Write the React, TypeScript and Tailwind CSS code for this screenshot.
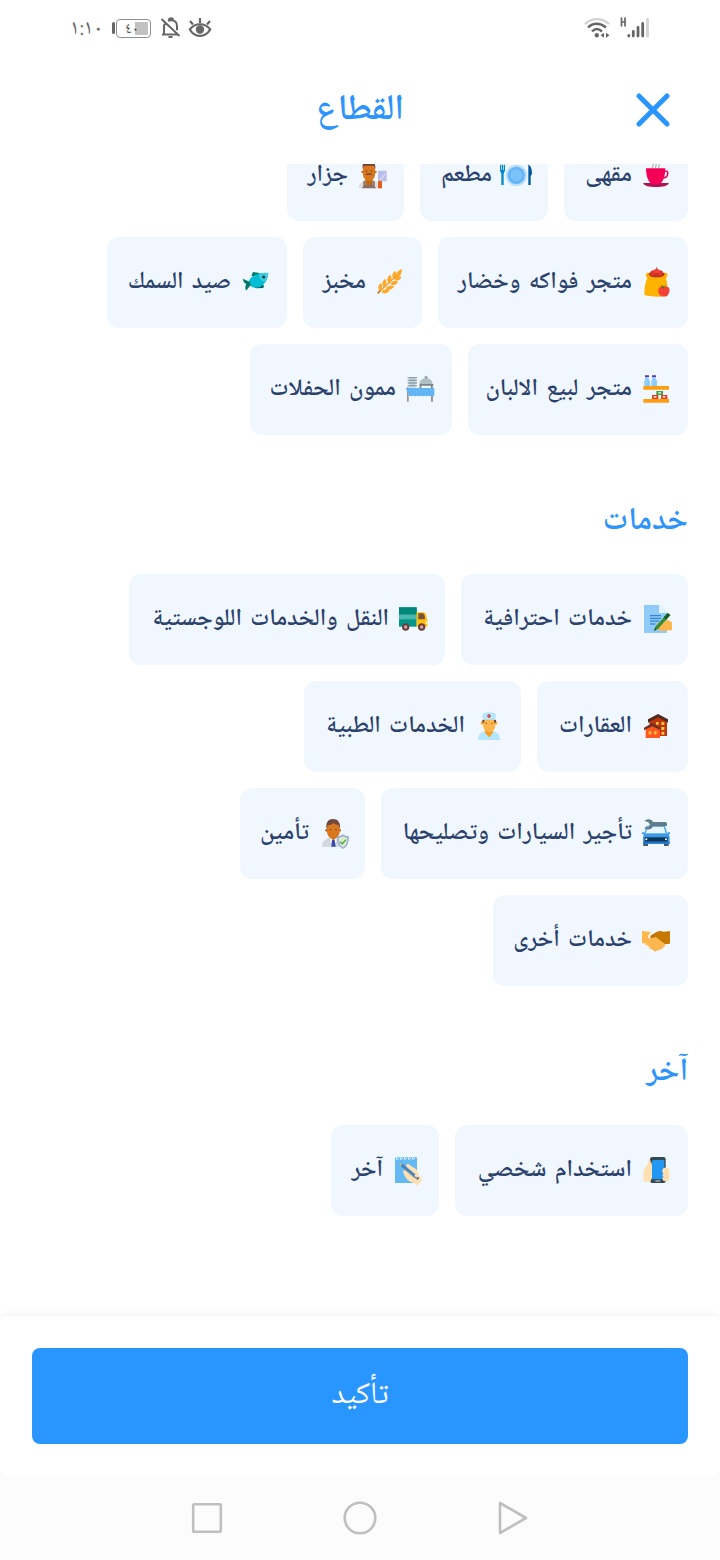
import React from 'react';

const FONT = "font-['Noto_Naskh_Arabic','DejaVu_Sans',sans-serif]";

function Svg({ children }: { children: React.ReactNode }) {
  return <svg viewBox="0 0 96 96" className="size-8 shrink-0" aria-hidden="true">{children}</svg>;
}

const Cup = () => (
  <Svg>
    <path d="M39 25c-4-5 3-8 0-13M48 25c-4-5 3-8 0-13M57 25c-4-5 3-8 0-13" fill="none" stroke="#8d8d8d" strokeWidth="2.5" />
    <path d="M72 34h8c6 0 5 20-12 20" fill="none" stroke="#f50057" strokeWidth="4.5" />
    <path d="M18 25h58c0 24-8 46-20 47H38C26 71 18 49 18 25z" fill="#f50057" />
    <path d="M9 69h78c-4 9-18 12-39 12S13 78 9 69z" fill="#ad1457" />
    <path d="M32 69h32l-5 4H37z" fill="#f50057" />
  </Svg>
);
const Restaurant = () => (
  <Svg>
    <circle cx="49" cy="46" r="32" fill="#bbdefb" />
    <circle cx="49" cy="46" r="26" fill="#64b5f6" />
    <circle cx="49" cy="46" r="18" fill="#7cc2fa" />
    <path d="M0 14h3v16h2V14h4v16h2V14h4v18l-4 9v34H4V41l-4-9z" fill="#0288d1" />
    <path d="M85 14c7 2 11 12 11 28l-4 6v27h-7z" fill="#01579b" />
  </Svg>
);
const Butcher = () => (
  <Svg>
    <path d="M8 85c0-16 10-20 24-24h16c16 4 24 8 24 24z" fill="#e0e0e0" />
    <path d="M28 55h22v18c-8 6-14 6-22 0z" fill="#bf6a13" />
    <circle cx="20" cy="36" r="4" fill="#c66a12" /><circle cx="58" cy="36" r="4" fill="#c66a12" />
    <path d="M21 26c0-22 36-22 36 0v16c0 14-9 20-18 20s-18-6-18-20z" fill="#d9781e" />
    <path d="M20 27C18 4 27 3 38 3s22 4 20 24l-4-10H24z" fill="#6d4038" />
    <path d="M29 46c2-6 8-7 10-5 2-2 8-1 10 5-3-2-6-2-10-2s-7 0-10 2z" fill="#6d4038" />
    <circle cx="31" cy="33" r="2" fill="#5b2e14" /><circle cx="47" cy="33" r="2" fill="#5b2e14" />
    <path d="M22 64l6-2v12h22V62l6 2v14l4 7H18l4-7z" fill="#8d6e63" />
    <path d="M66 32h23l3 3v29H66z" fill="#b8bde8" />
    <path d="M70 60l18-24v8L77 60z" fill="#d1d5f5" />
    <path d="M66 63h12v22H66z" fill="#e65c1c" />
  </Svg>
);
const Fruits = () => (
  <Svg>
    <path d="M22 32c-7-5-6-13 1-15h54c7 2 8 10 1 15 4 16 6 34 4 55-18 3-48 3-69-3 0-20 2-36 9-52z" fill="#ffb300" />
    <path d="M22 30c18 6 38 6 56 0-3 6-53 7-56 0z" fill="#ff8f00" />
    <ellipse cx="50" cy="22" rx="24" ry="9" fill="#b02a20" />
    <circle cx="40" cy="19" r="9" fill="#d9362c" /><circle cx="60" cy="19" r="9" fill="#d9362c" /><circle cx="50" cy="14" r="9" fill="#f44336" /><circle cx="50" cy="24" r="7" fill="#c62f26" />
    <path d="M50 1l1 6" stroke="#8d2a20" strokeWidth="2.5" />
    <path d="M72 61c10-8 21 2 15 16-3 9-8 13-15 11-7 2-14-3-16-11-5-14 7-23 16-16z" fill="#f44336" />
    <path d="M71 64c1-5 3-7 6-9M71 63c-5-1-5-4-6-7 4 0 6 2 6 7z" fill="#43702c" stroke="#43702c" strokeWidth="2" />
  </Svg>
);
const Wheat = () => (
  <Svg>
    <path d="M11 79L74 20" stroke="#ffa726" strokeWidth="4" />
    <g fill="#ffa726">
      <path d="M84 7c0 14-5 20-16 25-4-12 2-21 16-25z" />
      <path d="M63 12c7 8 7 16-1 25-10-7-9-17 1-25zM48 23c7 8 7 17-2 27-9-8-8-19 2-27zM33 35c6 8 6 17-2 27-9-8-7-19 2-27zM20 48c6 7 6 16-1 25-8-6-8-17 1-25z" />
      <path d="M82 30c-8-5-15-3-20 8 9 6 16 2 20-8zM72 44c-8-5-16-3-23 7 9 7 18 3 23-7zM60 58c-9-5-18-3-25 6 9 8 20 5 25-6zM47 70c-9-6-19-3-25 5 8 7 20 5 25-5z" />
    </g>
    <path d="M20 70l50-46" stroke="#f08f1b" strokeWidth="1.6" />
    <path d="M11 79l8-9" stroke="#b66a16" strokeWidth="4" />
  </Svg>
);
const Fish = () => (
  <Svg>
    <path d="M42 15l20 3-8 12-17-4z" fill="#00796b" />
    <path d="M42 58l33-4-2 9-22 1z" fill="#00695c" />
    <path d="M29 44C36 27 51 17 88 18c-2 24-14 42-36 44-9 1-17-3-23-11z" fill="#00bcd4" />
    <path d="M60 19c13-1 20-2 28-1-1 10-4 19-10 27-13-2-19-13-18-26z" fill="#3ccbdf" />
    <path d="M32 44L11 35c2 9 5 13 11 16-3 5-4 12-1 20l15-18z" fill="#00796b" />
    <circle cx="74" cy="30" r="4.5" fill="#0e3b45" /><circle cx="83" cy="22" r="2" fill="#80deea" />
  </Svg>
);
const Shelf = () => (
  <Svg>
    <path d="M15 8h11v7l4 6v15H13V21l3-6zM36 8h11v7l4 6v15H34V21l3-6z" fill="#90caf9" />
    <path d="M15 4h12v5H15zM36 4h12v5H36z" fill="#5e35b1" />
    <path d="M10 36h77v11H10zM10 75h77v11H10z" fill="#ff9f0f" />
    <path d="M49 51h20v12H49z" fill="#43a047" /><path d="M55 54h8v5h-8z" fill="#c5e8c6" />
    <path d="M36 63h19v12H36zM63 63h19v12H63z" fill="#e53e28" /><path d="M41 66h8v5h-8zM68 66h8v5h-8z" fill="#ffd3c8" />
  </Svg>
);
const Catering = () => (
  <Svg>
    <path d="M9 40h5v43H9zM81 40h6v43h-6z" fill="#a1928e" />
    <path d="M11 11h28M11 19h28M11 27h28M11 35h28" stroke="#90a4ae" strokeWidth="4" />
    <path d="M15 9h20v32H15z" fill="#90a4ae" opacity=".45" />
    <path d="M46 30c1-23 39-23 40 0z" fill="#b0bec5" /><circle cx="66" cy="10" r="4.5" fill="#90a4ae" />
    <path d="M46 30h42v5h-2v9h-5v-9H52v9h-5v-9z" fill="#78858b" />
    <path d="M5 42h86v25l-5-2-6 2-6-2-6 2-6-2-6 2-6-2-6 2-6-2-6 2-6-2-6 2-5-2z" fill="#64b5f6" />
  </Svg>
);
const Document = () => (
  <Svg>
    <path d="M12 3h45l24 24v60H12z" fill="#90caf9" /><path d="M57 3l24 24H57z" fill="#e1f5fe" />
    <path d="M30 35h33M30 43h33M30 51h28M30 60h16" stroke="#1976d2" strokeWidth="3" />
    <path d="M96 54v25c-18 0-26 4-38 0l-11-5 6-4-6-4 6-4-1-7 16 3 12-11z" fill="#ffb74d" />
    <path d="M83 27l8 6-37 42-13 6 5-13z" fill="#388e3c" /><path d="M83 27l8 6-12 14-8-7z" fill="#1b5e20" /><path d="M42 80l3-7 4 4z" fill="#1b3c1e" />
    <path d="M61 67c6 2 12-1 15-8l6 8-11 11z" fill="#ffb74d" />
  </Svg>
);
const Truck = () => (
  <Svg>
    <path d="M6 10h53v58H6z" fill="#009688" /><path d="M6 31h53v15H6z" fill="#4db6ac" /><path d="M6 10h53v21H6z" fill="#00897b" />
    <path d="M59 25h19c6 0 8 3 10 10l3 13v20H59z" fill="#ffc107" />
    <path d="M64 46V28h13c4 0 7 8 7 18z" fill="#7a5040" /><path d="M86 52h5v8h-5z" fill="#fff0c2" />
    <circle cx="26" cy="69" r="11" fill="#6a3c3c" /><circle cx="74" cy="69" r="11" fill="#6a3c3c" />
    <circle cx="26" cy="69" r="5" fill="#d9a7a7" /><circle cx="74" cy="69" r="5" fill="#d9a7a7" />
  </Svg>
);
const Houses = () => (
  <Svg>
    <path d="M28 27l26-14 27 14v48H28z" fill="#bf360c" />
    <path d="M54 9L24 25v10l30-16 30 16V25z" fill="#4e2a22" />
    <path d="M48 33h8v8h-8zM64 33h9v9h-9zM64 48h9v9h-9zM64 62h9v9h-9z" fill="#ffc23d" />
    <path d="M17 52l20-10 23 10v29H17z" fill="#ff5722" />
    <path d="M37 36L12 50v8l25-12 25 12v-8z" fill="#6d3327" />
    <path d="M26 61h8v9h-8zM42 61h8v9h-8z" fill="#ffc23d" />
  </Svg>
);
const Doctor = () => (
  <Svg>
    <path d="M15 87c1-18 9-23 22-27h22c14 4 22 10 22 27z" fill="#b3e5fc" />
    <path d="M36 53h24v12L48 79 36 65z" fill="#fb9a1c" />
    <circle cx="28" cy="36" r="5" fill="#ffa726" /><circle cx="68" cy="36" r="5" fill="#ffa726" />
    <path d="M30 24h37v17c0 16-10 22-18 22s-19-6-19-22z" fill="#ffb74d" />
    <path d="M28 27h6v8h-6zM63 27h6v8h-6z" fill="#6d4c41" />
    <path d="M29 8c9-6 30-6 39 0v18H29z" fill="#b3e5fc" />
    <path d="M48 9v12M42 15h12" stroke="#d0505a" strokeWidth="5" />
    <circle cx="40" cy="37" r="2" fill="#784719" /><circle cx="57" cy="37" r="2" fill="#784719" />
  </Svg>
);
const CarService = () => (
  <Svg>
    <path d="M10 84v-9h14v9zM72 84v-9h14v9z" fill="#455a64" />
    <path d="M6 43h7l1 4h69l1-4h6v6h-4l3 8v20H9V57l3-8H6z" fill="#3d98e8" />
    <path d="M20 23h54l9 25H12z" fill="#4ba7f0" /><path d="M23 26h48l6 20H17z" fill="#e7f6fe" />
    <path d="M14 58h69v13H14z" fill="#0b3554" /><path d="M9 72h80v5H9z" fill="#1976d2" /><circle cx="19" cy="64" r="3" fill="#fff" /><circle cx="78" cy="64" r="3" fill="#fff" />
    <path d="M13 9c10-8 22-6 26 3h36a6 6 0 0 1 0 13H39c-5 11-18 13-27 4l14-3 4-6-5-7z" fill="#607d8b" />
  </Svg>
);
const Insurance = () => (
  <Svg>
    <path d="M15 86c1-18 9-21 22-26h22c13 4 22 9 22 26z" fill="#cfd8dc" />
    <path d="M38 52h22v12L49 76 38 64z" fill="#bf6a13" /><path d="M37 58l12 8-6 12zM61 58l-12 8 6 12z" fill="#fff" /><path d="M45 65h8l3 21H43z" fill="#3949ab" />
    <circle cx="29" cy="37" r="4" fill="#b85f10" /><circle cx="68" cy="37" r="4" fill="#b85f10" />
    <path d="M30 24c0-16 38-16 38 0v16c0 15-10 22-19 22s-19-7-19-22z" fill="#d9781e" />
    <path d="M28 34C26 12 34 3 48 3s23 9 21 31l-4-12c-8-2-11-4-15-7-4 5-11 6-18 7z" fill="#704a40" />
    <circle cx="40" cy="35" r="2" fill="#5b3213" /><circle cx="57" cy="35" r="2" fill="#5b3213" />
    <path d="M78 49c5 4 11 6 18 6 0 19-5 32-18 38-13-6-18-19-18-38 7 0 13-2 18-6z" fill="#9fb0dc" />
    <path d="M78 55c4 3 8 4 13 5-1 14-4 22-13 28-9-6-12-14-13-28 5-1 9-2 13-5z" fill="#dcedc8" />
    <path d="M70 71l6 6 11-12" fill="none" stroke="#43a047" strokeWidth="4" />
  </Svg>
);
const Handshake = () => (
  <Svg>
    <path d="M90 18v38l-16 2-27-21-13 4c-5-3-3-8 0-11l17-10c9-5 13 0 21 0z" fill="#c77800" />
    <path d="M6 18l27 3-9 12c1 8 10 12 23 4l27 21c4 4 0 9-5 8 1 5-3 8-8 6-1 4-5 6-9 3-3 7-9 3-13-1L22 61c-5-3-6-7-16-7z" fill="#ffb74d" />
    <path d="M28 63l5 5M35 69l5 5M42 75l4 4" stroke="#e59a2c" strokeWidth="2.5" />
    <path d="M21 60l-5-5M32 71l-4-5" stroke="#ffca7a" strokeWidth="5" strokeLinecap="round" />
  </Svg>
);
const Phone = () => (
  <Svg>
    <path d="M32 11l-5 1c-2 12-6 20-12 27-7 8-5 27-4 41h26z" fill="#ffe0b2" />
    <rect x="30" y="6" width="47" height="78" rx="7" fill="#37474f" /><path d="M38 15h35v58H34V30z" fill="#2196f3" />
    <path d="M32 14l4 17v36l-5 14-10-2z" fill="#ffe0b2" />
    <path d="M46 78h15" stroke="#cfd8dc" strokeWidth="3" />
    <path d="M72 38h11a5 5 0 0 1 0 10h2a5 5 0 0 1 0 10h1a5 5 0 0 1-1 10h-2a5 5 0 0 1 0 10H73c-8-2-6-11-2-12-5-3-5-8 0-10-6-2-5-16 1-18z" fill="#ffe0b2" />
    <path d="M75 48h8M75 58h8M75 68h7" stroke="#ffcc80" strokeWidth="2" />
  </Svg>
);
const Notepad = () => (
  <Svg>
    <rect x="12" y="7" width="66" height="77" rx="3" fill="#64b9f4" />
    <path d="M17 5v8c4 2 5-2 5-4M29 5v8c4 2 5-2 5-4M41 5v8c4 2 5-2 5-4M53 5v8c4 2 5-2 5-4M65 5v8c4 2 5-2 5-4" fill="none" stroke="#e3f2fd" strokeWidth="3" />
    <path d="M46 29c6-4 10 0 15 5 12 6 20 12 22 25l11 15-15 18-11-9C51 80 44 69 37 53c-3-7 2-9 7-4z" fill="#ffe0b2" />
    <path d="M39 42l31 29" stroke="#f1c98e" strokeWidth="3" />
    <path d="M25 24l12 4 48 40-6 7-46-38z" fill="#4784bd" /><path d="M25 24l8 3-4 5z" fill="#f6c453" /><path d="M70 61l6-5 9 12-6 6z" fill="#ffe0b2" /><path d="M76 65l9 3-6 7z" fill="#4a5d85" />
  </Svg>
);

type Item = { label: string; icon: React.FC; box: string };

const FOOD: Item[][] = [
  [
    { label: 'مقهى', icon: Cup, box: 'w-[124px]' },
    { label: 'مطعم', icon: Restaurant, box: 'w-32' },
    { label: 'جزار', icon: Butcher, box: 'w-[117px]' },
  ],
  [
    { label: 'متجر فواكه وخضار', icon: Fruits, box: 'w-[250px]' },
    { label: 'مخبز', icon: Wheat, box: 'w-[119px]' },
    { label: 'صيد السمك', icon: Fish, box: 'w-[180px]' },
  ],
  [
    { label: 'متجر لبيع الالبان', icon: Shelf, box: 'w-[220px]' },
    { label: 'ممون الحفلات', icon: Catering, box: 'w-[202px]' },
  ],
];
const SERVICES: Item[][] = [
  [
    { label: 'خدمات احترافية', icon: Document, box: 'w-[227px]' },
    { label: 'النقل والخدمات اللوجستية', icon: Truck, box: 'w-[316px]' },
  ],
  [
    { label: 'العقارات', icon: Houses, box: 'w-[151px]' },
    { label: 'الخدمات الطبية', icon: Doctor, box: 'w-[217px]' },
  ],
  [
    { label: 'تأجير السيارات وتصليحها', icon: CarService, box: 'w-[307px]' },
    { label: 'تأمين', icon: Insurance, box: 'w-[125px]' },
  ],
  [{ label: 'خدمات أخرى', icon: Handshake, box: 'w-[195px]' }],
];
const OTHER: Item[][] = [
  [
    { label: 'استخدام شخصي', icon: Phone, box: 'w-[233px]' },
    { label: 'آخر', icon: Notepad, box: 'w-[108px]' },
  ],
];

function Chip({ label, icon: Icon, box }: Item) {
  return (
    <button className={`flex h-[91px] shrink-0 items-center gap-2 rounded-xl bg-[#f1f7fe] pr-4 ${box}`}>
      <Icon />
      <span className="whitespace-nowrap text-2xl leading-8 font-semibold text-[#2b426c] [word-spacing:3px]">{label}</span>
    </button>
  );
}

const Group = ({ rows }: { rows: Item[][] }) => (
  <div className="flex flex-col gap-4">
    {rows.map((row, i) => (
      <div key={i} className="flex gap-4">
        {row.map((item) => <Chip key={item.label} {...item} />)}
      </div>
    ))}
  </div>
);

const Heading = ({ children }: { children: string }) => (
  <h2 className="pt-[67px] pb-8 text-[32px] leading-10 font-semibold text-[#2d94fc]">{children}</h2>
);

export default function App() {
  return (
    <div dir="rtl" className={`flex h-[1560px] w-[720px] flex-col overflow-hidden bg-white ${FONT}`}>
      <div dir="ltr" className="flex h-14 shrink-0 items-center px-[70px] text-[#666]">
        <span className="mt-1 w-[34px] text-[21px] leading-6 whitespace-nowrap">١:١٠</span>
        <div className="ml-2 flex w-10 items-center gap-px">
          <span className="h-3 w-[3px] rounded-full bg-[#666]" />
          <div className="flex h-[19px] w-[35px] items-center rounded border-[1.5px] border-[#8e8e8e] bg-gradient-to-r from-white from-55% to-[#c2c2c2] to-55% bg-clip-content py-0.5 pr-0.5 pl-2">
            <span className="pt-1 text-[15px] leading-4 text-[#555]">٤٠</span>
          </div>
        </div>
        <svg viewBox="0 0 22 22" className="ml-2 size-[22px]" fill="none" stroke="#666" strokeWidth="2">
          <path d="M2 17.500h16M4 17V10c0-2 .5-3 1.500-4.200M8 4c1-.6 2-.8 3-.8 4 0 6 2.500 6 6v4M9 3c0-2.500 4-2.500 4 0M1.500 2l18 17M8.500 20h4" />
        </svg>
        <svg viewBox="0 0 24 22" className="ml-1.5 h-[22px] w-6" fill="none" stroke="#666" strokeWidth="2.2">
          <path d="M1.800 12.500c5-7 15.400-7 20.400 0-5 8.500-15.400 8.500-20.400 0zM12 6V1M5 7.500L2 4M19 7.500L22 4" /><circle cx="12" cy="12.500" r="4.200" fill="#666" stroke="none" />
        </svg>
        <svg viewBox="0 0 26 22" className="mr-2.5 ml-auto h-[22px] w-[26px]" fill="none" stroke="#666" strokeWidth="2.400">
          <path d="M1 7c7-6.500 17-6.500 24 0" stroke="#d2d2d2" /><path d="M4 10.500c5-5 12-5 18 0M8 14.500c3-3.200 6.500-3.200 10 0" /><circle cx="12.800" cy="18.300" r="2.200" fill="#666" stroke="none" /><path d="M16.500 18.300l3.500-2.500v5zM25.500 18.300L22 15.800v5z" fill="#666" stroke="none" />
        </svg>
        <svg viewBox="0 0 30 22" className="h-[22px] w-[30px]" stroke="#666" strokeWidth="2.800" strokeLinecap="round">
          <path d="M1.500 .5v9M5 .5v9M1.500 5H5" strokeWidth="1.700" strokeLinecap="butt" />
          <path d="M8.800 18.500v.5M13.300 14.500V19M18 10.500V19M22.700 6.500V19" /><path d="M27.500 2.500V19" stroke="#d2d2d2" />
        </svg>
      </div>
      <header className="grid h-[108px] shrink-0 grid-cols-3 items-center px-12">
        <button aria-label="إغلاق" className="flex size-[38px] items-center justify-center">
          <svg viewBox="0 0 34 34" className="size-[34px]"><path d="M3 3l28 28M31 3L3 31" stroke="#2995ff" strokeWidth="5" strokeLinecap="round" /></svg>
        </button>
        <h1 className="pt-1 text-center text-4xl leading-10 font-semibold text-[#2d94fc]">القطاع</h1>
      </header>
      <main className="min-h-0 flex-1 overflow-hidden px-8">
        <div className="-mt-[34px]">
          <Group rows={FOOD} />
          <Heading>خدمات</Heading>
          <Group rows={SERVICES} />
          <Heading>آخر</Heading>
          <Group rows={OTHER} />
        </div>
      </main>
      <footer className="flex h-40 shrink-0 rounded-md bg-white p-8 shadow-[0_0_10px_rgba(0,0,0,0.08)]">
        <button className="h-24 w-full rounded-lg bg-[#2995ff] pt-0.5 text-[31px] leading-10 text-white">تأكيد</button>
      </footer>
      <nav dir="ltr" className="flex h-[84px] shrink-0 items-center justify-center gap-[119px] bg-[#fcfcfc]">
        <svg viewBox="0 0 34 34" className="size-[34px]"><rect x="3.200" y="3.200" width="27.600" height="27.600" rx="1" fill="none" stroke="#bfbfbf" strokeWidth="2.600" /></svg>
        <svg viewBox="0 0 34 34" className="size-[34px]"><circle cx="17" cy="17" r="15.300" fill="none" stroke="#bfbfbf" strokeWidth="2.600" /></svg>
        <svg viewBox="0 0 34 34" className="size-[34px]"><path d="M4 2v30l26-15z" fill="none" stroke="#bfbfbf" strokeWidth="2.600" strokeLinejoin="round" /></svg>
      </nav>
    </div>
  );
}
